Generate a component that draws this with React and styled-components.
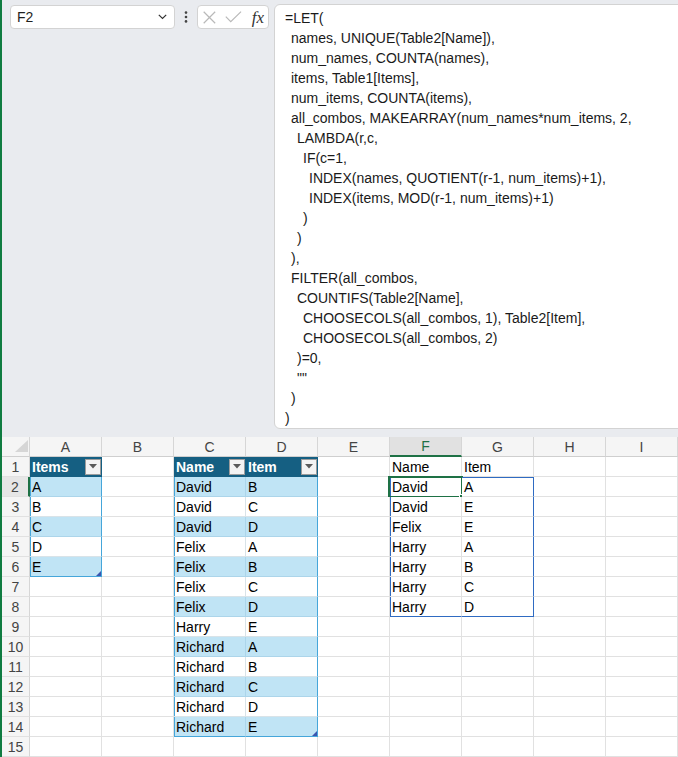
import React from 'react';
import styled, { createGlobalStyle } from 'styled-components';

const GlobalStyle = createGlobalStyle`
  html, body { margin: 0; padding: 0; }
  body { background: #ffffff; font-family: "Liberation Sans", Arial, sans-serif; }
  * { box-sizing: border-box; }
`;

const GREEN = '#1e7145';
const TABLE_EDGE = '#45a6da';
const SPILL = '#2f6bc2';

const Window = styled.div`
  width: 678px;
  height: 757px;
  overflow: hidden;
  border-left: 2px solid #107c41;
  background: #e9ebef;
  display: flex;
  flex-direction: column;
`;

const TopArea = styled.div`
  height: 437px;
  flex-shrink: 0;
  display: flex;
  align-items: flex-start;
  padding: 4px 0 8px 8px;
`;

const NameBox = styled.div`
  width: 165px;
  height: 24px;
  margin-top: 1px;
  background: #ffffff;
  border: 1px solid #d3d3d3;
  border-radius: 4px;
  display: flex;
  align-items: center;
  justify-content: space-between;
  padding: 0 7px 0 6px;
  font-size: 14px;
  color: #1f1f1f;
`;

const DotsWrap = styled.div`
  width: 22px;
  height: 24px;
  margin-top: 1px;
  display: flex;
  align-items: center;
  justify-content: center;
`;

const FxBox = styled.div`
  width: 72px;
  height: 24px;
  margin-top: 1px;
  background: #ffffff;
  border: 1px solid #d3d3d3;
  border-radius: 4px;
  display: flex;
  align-items: center;
  padding: 0 4px 0 5px;
  gap: 9px;
`;

const Fx = styled.span`
  font-family: "Liberation Serif", "Times New Roman", serif;
  font-style: italic;
  font-size: 17px;
  color: #333333;
  margin-left: 1px;
  line-height: 1;
`;

const FormulaBox = styled.div`
  flex: 1;
  margin-left: 5px;
  margin-right: -12px;
  height: 425px;
  background: #ffffff;
  border: 1px solid #d3d3d3;
  border-radius: 6px;
  padding: 3px 0 1px 10px;
  font-size: 14px;
  color: #1a1a1a;
`;

const FormulaLine = styled.div`
  height: 20px;
  line-height: 20px;
  white-space: pre;
  padding-left: ${p => p.$level * 6}px;
`;

const Sheet = styled.div`
  display: grid;
  grid-template-columns: 28px repeat(9, 72px);
  grid-auto-rows: 20px;
  background: #ffffff;
  font-size: 14px;
`;

const ColHead = styled.div`
  display: flex;
  align-items: center;
  justify-content: center;
  background: ${p => (p.$active ? '#e1e1e1' : '#f5f5f5')};
  color: ${p => (p.$active ? GREEN : '#444444')};
  border-right: 1px solid #d6d6d6;
  border-bottom: ${p => (p.$active ? `2px solid ${GREEN}` : '1px solid #cfcfcf')};
`;

const Corner = styled.div`
  display: flex;
  align-items: flex-end;
  justify-content: flex-end;
  padding: 0 1px 4px 0;
  background: #f5f5f5;
  border-right: 1px solid #d6d6d6;
  border-bottom: 1px solid #cfcfcf;
`;

const RowHead = styled.div`
  display: flex;
  align-items: center;
  justify-content: center;
  background: ${p => (p.$active ? '#e6e6e6' : '#f5f5f5')};
  color: #444444;
  border-bottom: 1px solid #e1e1e1;
  border-right: ${p => (p.$active ? `2px solid ${GREEN}` : '1px solid #d6d6d6')};
`;

const KIND = {
  plain: { bg: '#ffffff', line: '#e1e1e1', color: '#000000', weight: 400 },
  row: { bg: '#ffffff', line: '#d9e3e8', color: '#000000', weight: 400 },
  band: { bg: '#c0e4f5', line: '#acd5ea', color: '#000000', weight: 400 },
  head: { bg: '#155f82', line: '#155f82', color: '#ffffff', weight: 700 },
};

const Cell = styled.div`
  position: relative;
  min-width: 0;
  display: flex;
  align-items: center;
  padding: 0 0 0 2px;
  white-space: nowrap;
  background: ${p => KIND[p.$kind].bg};
  color: ${p => KIND[p.$kind].color};
  font-weight: ${p => KIND[p.$kind].weight};
  border-right: 1px solid ${p => p.$edgeR || KIND[p.$kind].line};
  border-bottom: 1px solid ${p => p.$edgeB || KIND[p.$kind].line};
  box-shadow: ${p =>
    [p.$edgeL && `inset 1px 0 0 ${p.$edgeL}`, p.$edgeT && `inset 0 1px 0 ${p.$edgeT}`]
      .filter(Boolean)
      .join(', ') || 'none'};
`;

const CellText = styled.span`
  flex: 1;
  overflow: visible;
`;

const FilterButton = styled.span`
  width: 16px;
  height: 16px;
  flex-shrink: 0;
  background: #f3f3f3;
  border: 1px solid #9c9c9c;
  display: flex;
  align-items: center;
  justify-content: center;
`;

const ActiveFrame = styled.span`
  position: absolute;
  top: -1px;
  left: -2px;
  right: -2px;
  bottom: -2px;
  border: 2px solid ${GREEN};
  pointer-events: none;
`;

const FillHandle = styled.span`
  position: absolute;
  right: -4px;
  bottom: -4px;
  width: 6px;
  height: 6px;
  background: ${GREEN};
  border: 1px solid #ffffff;
`;

const ResizeHandle = styled.svg`
  position: absolute;
  right: 0;
  bottom: 0;
`;

const ChevronDown = () => (
  <svg width="9" height="6" viewBox="0 0 9 6">
    <polyline points="0.8,0.8 4.5,4.5 8.2,0.8" fill="none" stroke="#333" strokeWidth="1.2" />
  </svg>
);

const Dots = () => (
  <svg width="4" height="12" viewBox="0 0 4 12">
    <circle cx="2" cy="1.6" r="1.3" fill="#444" />
    <circle cx="2" cy="6" r="1.3" fill="#444" />
    <circle cx="2" cy="10.4" r="1.3" fill="#444" />
  </svg>
);

const CancelIcon = () => (
  <svg width="13" height="13" viewBox="0 0 13 13">
    <path d="M0.7 0.7 L12.3 12.3 M12.3 0.7 L0.7 12.3" stroke="#b9b9b9" strokeWidth="1.2" fill="none" />
  </svg>
);

const EnterIcon = () => (
  <svg width="17" height="12" viewBox="0 0 17 12">
    <polyline points="0.8,5.6 5.8,10.8 16.2,0.6" stroke="#b9b9b9" strokeWidth="1.2" fill="none" />
  </svg>
);

const CornerTriangle = () => (
  <svg width="13" height="12" viewBox="0 0 13 12">
    <polygon points="13,0 13,12 0,12" fill="#d6d6d6" />
  </svg>
);

const FilterArrow = () => (
  <svg width="8" height="5" viewBox="0 0 8 5">
    <polygon points="0,0 8,0 4,4.5" fill="#5a5a5a" />
  </svg>
);

const formula = [
  [0, '=LET('],
  [1, 'names, UNIQUE(Table2[Name]),'],
  [1, 'num_names, COUNTA(names),'],
  [1, 'items, Table1[Items],'],
  [1, 'num_items, COUNTA(items),'],
  [1, 'all_combos, MAKEARRAY(num_names*num_items, 2,'],
  [2, 'LAMBDA(r,c,'],
  [3, 'IF(c=1,'],
  [4, 'INDEX(names, QUOTIENT(r-1, num_items)+1),'],
  [4, 'INDEX(items, MOD(r-1, num_items)+1)'],
  [3, ')'],
  [2, ')'],
  [1, '),'],
  [1, 'FILTER(all_combos,'],
  [2, 'COUNTIFS(Table2[Name],'],
  [3, 'CHOOSECOLS(all_combos, 1), Table2[Item],'],
  [3, 'CHOOSECOLS(all_combos, 2)'],
  [2, ')=0,'],
  [2, '""'],
  [1, ')'],
  [0, ')'],
];

const COLS = ['A', 'B', 'C', 'D', 'E', 'F', 'G', 'H', 'I'];

const table1 = ['Items', 'A', 'B', 'C', 'D', 'E'];
const table2 = [
  ['Name', 'Item'],
  ['David', 'B'],
  ['David', 'C'],
  ['David', 'D'],
  ['Felix', 'A'],
  ['Felix', 'B'],
  ['Felix', 'C'],
  ['Felix', 'D'],
  ['Harry', 'E'],
  ['Richard', 'A'],
  ['Richard', 'B'],
  ['Richard', 'C'],
  ['Richard', 'D'],
  ['Richard', 'E'],
];
const spill = [
  ['Name', 'Item'],
  ['David', 'A'],
  ['David', 'E'],
  ['Felix', 'E'],
  ['Harry', 'A'],
  ['Harry', 'B'],
  ['Harry', 'C'],
  ['Harry', 'D'],
];

function describe(r, c) {
  const d = { kind: 'plain', text: '', filter: false };
  const bandKind = r === 1 ? 'head' : r % 2 === 0 ? 'band' : 'row';
  if (c === 0 && r <= table1.length) {
    d.kind = bandKind;
    d.text = table1[r - 1];
    d.filter = r === 1;
    d.edgeL = r > 1 ? TABLE_EDGE : null;
    d.edgeR = r > 1 ? TABLE_EDGE : null;
    if (r === table1.length) {
      d.edgeB = TABLE_EDGE;
      d.handle = true;
    }
  } else if ((c === 2 || c === 3) && r <= table2.length) {
    d.kind = bandKind;
    d.text = table2[r - 1][c - 2];
    d.filter = r === 1;
    if (c === 2 && r > 1) d.edgeL = TABLE_EDGE;
    if (c === 3 && r > 1) d.edgeR = TABLE_EDGE;
    if (r === table2.length) {
      d.edgeB = TABLE_EDGE;
      if (c === 3) d.handle = true;
    }
  } else if ((c === 5 || c === 6) && r <= spill.length) {
    d.text = spill[r - 1][c - 5];
    if (r >= 2) {
      if (c === 5) d.edgeL = SPILL;
      if (c === 6) d.edgeR = SPILL;
      if (r === 2) d.edgeT = SPILL;
      if (r === spill.length) d.edgeB = SPILL;
    }
    if (r === 2 && c === 5) d.active = true;
  }
  return d;
}

export default function App() {
  const rows = [];
  for (let r = 1; r <= 15; r++) {
    rows.push(
      <RowHead key={`rh${r}`} $active={r === 2}>
        {r}
      </RowHead>
    );
    for (let c = 0; c < COLS.length; c++) {
      const d = describe(r, c);
      rows.push(
        <Cell
          key={`c${r}-${c}`}
          $kind={d.kind}
          $edgeL={d.edgeL}
          $edgeR={d.edgeR}
          $edgeT={d.edgeT}
          $edgeB={d.edgeB}
        >
          <CellText>{d.text}</CellText>
          {d.filter && (
            <FilterButton>
              <FilterArrow />
            </FilterButton>
          )}
          {d.active && (
            <ActiveFrame>
              <FillHandle />
            </ActiveFrame>
          )}
          {d.handle && (
            <ResizeHandle width="5" height="5" viewBox="0 0 5 5">
              <polygon points="5,0 5,5 0,5" fill="#3b56b0" />
            </ResizeHandle>
          )}
        </Cell>
      );
    }
  }

  return (
    <>
      <GlobalStyle />
      <Window>
        <TopArea>
          <NameBox>
            <span>F2</span>
            <ChevronDown />
          </NameBox>
          <DotsWrap>
            <Dots />
          </DotsWrap>
          <FxBox>
            <CancelIcon />
            <EnterIcon />
            <Fx>fx</Fx>
          </FxBox>
          <FormulaBox>
            {formula.map(([level, text], i) => (
              <FormulaLine key={i} $level={level}>
                {text}
              </FormulaLine>
            ))}
          </FormulaBox>
        </TopArea>
        <Sheet>
          <Corner>
            <CornerTriangle />
          </Corner>
          {COLS.map(col => (
            <ColHead key={col} $active={col === 'F'}>
              {col}
            </ColHead>
          ))}
          {rows}
        </Sheet>
      </Window>
    </>
  );
}
